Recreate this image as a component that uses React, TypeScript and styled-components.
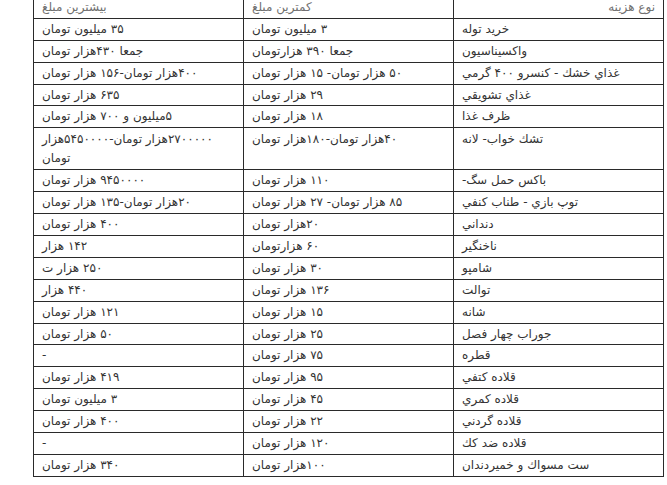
import React from "react";
import styled, { createGlobalStyle } from "styled-components";

const Global = createGlobalStyle`
  html, body {
    margin: 0;
    padding: 0;
    background: #ffffff;
    overflow: hidden;
  }
  body {
    font-family: "DejaVu Sans", "Noto Sans", sans-serif;
  }
`;

const Page = styled.div`
  padding-left: 33px;
  width: 667px;
  height: 485px;
  box-sizing: border-box;
  overflow: hidden;
`;

const Table = styled.table`
  border-collapse: collapse;
  table-layout: fixed;
  width: 631px;
  margin-top: -4px;
`;

const Row = styled.tr<{ $tall?: boolean }>`
  height: ${(p) => (p.$tall ? "42px" : "21.9px")};
`;

const Cell = styled.td<{ $right?: boolean; $head?: boolean; $top?: boolean }>`
  border: 1px solid #2a2a2a;
  padding: ${(p) => (p.$top ? "2px" : "0")} 8px 0 8px;
  direction: rtl;
  text-align: ${(p) => (p.$right ? "right" : "left")};
  vertical-align: ${(p) => (p.$top ? "top" : "middle")};
  font-size: 12px;
  line-height: 19px;
  color: ${(p) => (p.$head ? "#707070" : "#333333")};
  white-space: pre-line;
  overflow: hidden;
`;

type R = { type: string; min: string; max: string; tall?: boolean };

const rows: R[] = [
  { type: "خرید توله", min: " ۳ میلیون تومان", max: "۳۵ میلیون تومان" },
  { type: "واکسیناسیون", min: "جمعا ۳۹۰ هزارتومان", max: "جمعا ۴۳۰هزار تومان" },
  { type: "غذاي خشك - كنسرو ۴۰۰ گرمي", min: "۵۰ هزار تومان- ۱۵ هزار تومان", max: " ۴۰۰هزار تومان-۱۵۶ هزار تومان" },
  { type: "غذاي تشويقي", min: "۲۹ هزار تومان", max: "۶۳۵ هزار تومان" },
  { type: "ظرف غذا", min: "۱۸ هزار تومان", max: "۵میلیون و ۷۰۰ هزار تومان" },
  { type: "تشك خواب- لانه", min: "۴۰هزار تومان-۱۸۰هزار تومان", max: "۲۷۰۰۰۰۰هزار تومان-۵۴۵۰۰۰۰هزار\nتومان", tall: true },
  { type: "باكس حمل سگ-", min: "۱۱۰ هزار تومان", max: "۹۴۵۰۰۰۰ هزار تومان" },
  { type: "توپ بازي - طناب كنفي", min: "۸۵ هزار تومان- ۲۷ هزار تومان", max: " ۲۰هزار تومان-۱۳۵ هزار تومان" },
  { type: "دنداني", min: "۲۰هزار تومان", max: "۴۰۰ هزار تومان" },
  { type: "ناخنگير", min: "۶۰ هزارتومان", max: "۱۴۲ هزار" },
  { type: "شامپو", min: " ۳۰ هزار تومان", max: "۲۵۰ هزار ت" },
  { type: " توالت", min: "۱۳۶ هزار تومان", max: "۴۴۰ هزار" },
  { type: "شانه", min: "۱۵ هزار تومان", max: "۱۲۱ هزار تومان" },
  { type: "جوراب چهار فصل", min: "۲۵ هزار تومان", max: "۵۰ هزار تومان" },
  { type: "قطره", min: "۷۵ هزار تومان", max: "-" },
  { type: "قلاده كتفي", min: "۹۵ هزار تومان", max: "۴۱۹ هزار تومان" },
  { type: "قلاده كمري", min: "۴۵ هزار تومان", max: "۳ میلیون تومان" },
  { type: "قلاده گردني", min: "۲۲ هزار تومان", max: "۴۰۰ هزار تومان" },
  { type: "قلاده ضد كك", min: "۱۲۰ هزار تومان", max: "-" },
  { type: "ست مسواك و خميردندان", min: "۱۰۰هزار تومان", max: "۳۴۰ هزار تومان" },
];

export default function App() {
  return (
    <Page>
      <Global />
      <Table>
        <tbody>
          <Row>
            <Cell $head>بیشترین مبلغ</Cell>
            <Cell $head>کمترین مبلغ</Cell>
            <Cell $head $right>نوع هزینه</Cell>
          </Row>
          {rows.map((r, i) => (
            <Row key={i} $tall={r.tall}>
              <Cell $top={r.tall}>{r.max}</Cell>
              <Cell $top={r.tall}>{r.min}</Cell>
              <Cell $top={r.tall}>{r.type}</Cell>
            </Row>
          ))}
        </tbody>
      </Table>
    </Page>
  );
}
